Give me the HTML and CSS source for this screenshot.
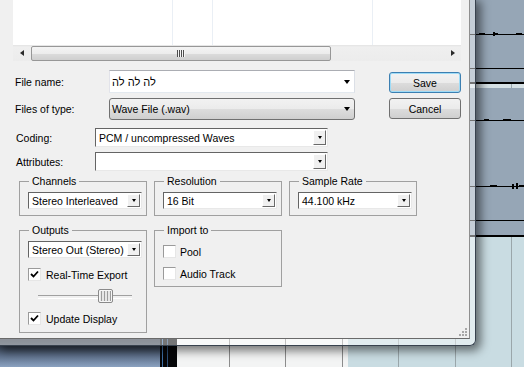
FILE: index.html
```html
<!DOCTYPE html>
<html lang="en">
<head>
    <meta charset="UTF-8">
    <title>Export Audio Mixdown</title>
    <link rel="stylesheet" href="styles.css">
</head>
<body>
    <div class="desktop">
        <!-- project window behind the dialog -->
        <div class="backdrop">
            <svg class="lanes" width="524" height="237" viewBox="0 0 524 237" aria-hidden="true">
                <rect width="524" height="237" fill="#96a6b6"/>
                <g fill="#000">
                    <rect y="34" width="524" height="1"/>
                    <rect x="479" y="33" width="6" height="2"/>
                    <rect x="493" y="32" width="2" height="4"/>
                    <rect x="495" y="33" width="3" height="2"/>
                    <rect x="516" y="33" width="6" height="2"/>
                    <rect y="68" width="524" height="1"/>
                    <rect y="82" width="524" height="2"/>
                    <rect y="120" width="524" height="1"/>
                    <rect x="484" y="119" width="5" height="2"/>
                    <rect x="503" y="119" width="8" height="2"/>
                    <rect y="186" width="524" height="1"/>
                    <rect x="490" y="185" width="7" height="2"/>
                    <rect x="512" y="184" width="2" height="5"/>
                    <rect x="516" y="183" width="2" height="6"/>
                    <rect x="519" y="185" width="5" height="2"/>
                    <rect y="220" width="524" height="1"/>
                    <rect y="235" width="524" height="2"/>
                </g>
                <rect y="84" width="524" height="4" fill="#d6e1e5"/>
                <rect x="511" y="84" width="1" height="4" fill="#9aa8ae"/>
            </svg>
            <div class="lower">
                <div class="mixer"></div>
                <div class="meter"></div>
                <div class="ruler"></div>
                <div class="ruler tinted"></div>
            </div>
        </div>

        <div class="window">
            <div class="client">
                <div class="file-list">
                    <div class="list-body">
                        <div class="list-col"></div>
                        <div class="list-col"></div>
                        <div class="list-col"></div>
                        <div class="list-col"></div>
                    </div>
                    <div class="hscroll">
                        <div class="scroll-arrow left"></div>
                        <div class="scroll-thumb"><span class="thumb-grip"></span></div>
                        <div class="scroll-track"></div>
                        <div class="scroll-arrow right"></div>
                    </div>
                </div>

                <div class="name-grid">
                    <label class="row-label">File name:</label>
                    <div class="text-combo"><span class="hebrew">לה לה לה</span><span class="drop-arrow"></span></div>
                    <button class="btn btn-default save">Save</button>

                    <label class="row-label">Files of type:</label>
                    <div class="type-combo"><span>Wave File (.wav)</span><span class="drop-arrow"></span></div>
                    <button class="btn cancel">Cancel</button>
                </div>

                <div class="options">
                    <div class="field-grid">
                        <label class="row-label">Coding:</label>
                        <div class="select tall"><span class="select-value">PCM / uncompressed Waves</span><span class="select-button"></span></div>
                        <label class="row-label">Attributes:</label>
                        <div class="select tall"><span class="select-value"></span><span class="select-button"></span></div>
                    </div>

                    <div class="group-row">
                        <fieldset class="group">
                            <legend>Channels</legend>
                            <div class="select"><span class="select-value">Stereo Interleaved</span><span class="select-button"></span></div>
                        </fieldset>
                        <fieldset class="group">
                            <legend>Resolution</legend>
                            <div class="select"><span class="select-value">16 Bit</span><span class="select-button"></span></div>
                        </fieldset>
                        <fieldset class="group">
                            <legend>Sample Rate</legend>
                            <div class="select"><span class="select-value">44.100 kHz</span><span class="select-button"></span></div>
                        </fieldset>
                    </div>

                    <div class="group-row second">
                        <fieldset class="group outputs">
                            <legend>Outputs</legend>
                            <div class="select"><span class="select-value">Stereo Out (Stereo)</span><span class="select-button"></span></div>
                            <div class="check-row first">
                                <span class="check checked"><svg width="11" height="11" viewBox="0 0 11 11"><polyline points="2,5 4.5,7.5 9,2.5" fill="none" stroke="#000" stroke-width="1.8"/></svg></span>
                                <span>Real-Time Export</span>
                            </div>
                            <div class="slider"><span class="slider-thumb"></span></div>
                            <div class="check-row">
                                <span class="check checked"><svg width="11" height="11" viewBox="0 0 11 11"><polyline points="2,5 4.5,7.5 9,2.5" fill="none" stroke="#000" stroke-width="1.8"/></svg></span>
                                <span>Update Display</span>
                            </div>
                        </fieldset>
                        <fieldset class="group import">
                            <legend>Import to</legend>
                            <div class="check-row first">
                                <span class="check"></span>
                                <span>Pool</span>
                            </div>
                            <div class="check-row">
                                <span class="check"></span>
                                <span>Audio Track</span>
                            </div>
                        </fieldset>
                    </div>
                </div>

                <svg class="size-grip" width="10" height="10" viewBox="0 0 10 10" aria-hidden="true">
                    <g fill="#a8a8a8">
                        <rect x="7" y="1" width="2" height="2"/>
                        <rect x="4" y="4" width="2" height="2"/>
                        <rect x="7" y="4" width="2" height="2"/>
                        <rect x="1" y="7" width="2" height="2"/>
                        <rect x="4" y="7" width="2" height="2"/>
                        <rect x="7" y="7" width="2" height="2"/>
                    </g>
                </svg>
            </div>
        </div>
    </div>
</body>
</html>
```

FILE: styles.css
```css
:root {
    --face: #f0f0f0;
    --text: #000000;
    --etch: #a0a0a0;
    --sunken: #646464;
    --light: #e8e8e8;
    --btn-border: #707070;
    --btn-face: linear-gradient(#f2f2f2, #ebebeb 50%, #dddddd 50%, #cfcfcf);
}

* {
    margin: 0;
    padding: 0;
    box-sizing: border-box;
}

body {
    font-family: "Liberation Sans", Arial, "DejaVu Sans", sans-serif;
    font-size: 10.5px;
    color: var(--text);
    background-color: #c9dce2;
}

.desktop {
    position: relative;
    width: 524px;
    height: 367px;
    overflow: hidden;
}

/* project window behind */
.backdrop {
    display: flex;
    flex-direction: column;
    height: 367px;
}

.lanes {
    display: block;
    flex: none;
}

.lower {
    display: flex;
    flex: 1;
}

.mixer {
    width: 160px;
    background: linear-gradient(#2e3846 0, #2e3846 104px, #3a4658 110px, #5a6c86 118px, #8ba2c0 130px);
}

.meter {
    width: 17px;
    background: linear-gradient(90deg, #050608 2px, #3d6fa6 2px 3px, #050608 3px 7px, #2c4f78 7px 8px, #050608 8px);
}

.ruler {
    width: 171px;
    background: #f3f4f4 linear-gradient(90deg, transparent 52px, #8c8c8c 52px 53px, transparent 53px 108px, #8c8c8c 108px 109px, transparent 109px 165px, #8c8c8c 165px 166px, transparent 166px);
}

.ruler.tinted {
    flex: 1;
    background: #c9dce2 linear-gradient(90deg, transparent 50px, #9aa6aa 50px 51px, transparent 51px 107px, #9aa6aa 107px 108px, transparent 108px 163px, #9aa6aa 163px 164px, transparent 164px);
}

/* dialog window sitting on top of the project window */
.window {
    position: absolute;
    left: 0;
    top: 0;
    width: 476px;
    height: 346px;
    padding: 0 5px 6px 0;
    background: rgba(255, 255, 255, 0.45);
    border-right: 1px solid #38424e;
    border-bottom: 1px solid #38424e;
    border-bottom-right-radius: 6px;
    box-shadow: 3px 3px 10px 2px rgba(0, 0, 0, 0.5);
}

.client {
    position: relative;
    height: 100%;
    background-color: var(--face);
    border-right: 1px solid #8f8f8f;
    border-bottom: 1px solid #6a6a6a;
}

/* file browser list */
.file-list {
    margin-left: 13px;
    width: 448px;
}

.list-body {
    display: flex;
    height: 45px;
    background: #ffffff;
}

.list-col {
    border-right: 1px solid #eaeff5;
}

.list-col:nth-child(1) { width: 160px; }
.list-col:nth-child(2) { width: 40px; }
.list-col:nth-child(3) { width: 160px; }
.list-col:nth-child(4) { flex: 1; border-right: none; }

.hscroll {
    display: flex;
    align-items: center;
    height: 16px;
    background: linear-gradient(#e3e3e3, #efefef 2px, #ececec);
}

.scroll-arrow {
    width: 17px;
    height: 16px;
    display: flex;
    align-items: center;
    justify-content: center;
}

.scroll-arrow::before {
    content: "";
    border-style: solid;
    border-color: transparent;
}

.scroll-arrow.left::before {
    border-width: 3.5px 4px 3.5px 0;
    border-right-color: #2a2a2a;
}

.scroll-arrow.right::before {
    border-width: 3.5px 0 3.5px 4px;
    border-left-color: #2a2a2a;
}

.scroll-thumb {
    margin-left: 1px;
    width: 300px;
    height: 15px;
    border: 1px solid #979797;
    border-radius: 2px;
    background: linear-gradient(#f4f4f4, #ececec 50%, #dcdcdc 50%, #cfcfcf);
    display: flex;
    align-items: center;
    justify-content: center;
}

.thumb-grip {
    width: 8px;
    height: 7px;
    background: repeating-linear-gradient(90deg, #4d4d4d 0 1px, #f6f6f6 1px 2px);
}

.scroll-track {
    flex: 1;
}

/* name / type rows */
.name-grid {
    display: grid;
    grid-template-columns: 94px 246px 1fr;
    grid-template-rows: 23px 22px;
    row-gap: 5px;
    align-items: center;
    margin: 9px 8px 0 15px;
}

.row-label {
    white-space: nowrap;
}

.text-combo,
.type-combo {
    display: flex;
    align-items: center;
    justify-content: space-between;
    padding: 0 4px 0 2px;
    white-space: nowrap;
}

.text-combo {
    height: 23px;
    background: #ffffff;
    border: 1px solid;
    border-color: #abadb3 #dbdfe6 #e3e9ef #e2e3ea;
}

.type-combo {
    height: 22px;
    border: 1px solid var(--btn-border);
    border-radius: 3px;
    background: var(--btn-face);
}

.hebrew {
    font-family: "Liberation Sans", "DejaVu Sans", sans-serif;
    font-size: 11px;
}

.drop-arrow {
    width: 0;
    height: 0;
    border-style: solid;
    border-width: 4px 3.5px 0;
    border-color: #000 transparent transparent;
}

.btn {
    width: 72px;
    height: 21px;
    margin-left: 34px;
    border: 1px solid var(--btn-border);
    border-radius: 3px;
    background: var(--btn-face);
    font: inherit;
    color: var(--text);
}

.btn-default {
    border-color: #3c7fb1;
    box-shadow: inset 0 0 0 1px #9fdcf7;
}

.save {
    align-self: end;
}

.cancel {
    align-self: start;
}

/* lower options */
.options {
    margin: 8px 0 0 16px;
}

.field-grid {
    display: grid;
    grid-template-columns: 79px 233px;
    grid-template-rows: 19px 19px;
    row-gap: 5px;
    align-items: center;
}

.select {
    display: flex;
    height: 17px;
    background: #ffffff;
    border: 1px solid;
    border-color: var(--sunken) var(--light) var(--light) var(--sunken);
}

.select.tall {
    height: 19px;
}

.select-value {
    flex: 1;
    padding-left: 3px;
    white-space: nowrap;
    overflow: hidden;
    display: flex;
    align-items: center;
}

.select-button {
    width: 13px;
    margin: 1px;
    background: var(--face);
    border: 1px solid;
    border-color: #ffffff #696969 #696969 #ffffff;
    display: flex;
    align-items: center;
    justify-content: center;
}

.select-button::before {
    content: "";
    border-style: solid;
    border-width: 3px 2.5px 0;
    border-color: #000 transparent transparent;
}

.group-row {
    display: flex;
    align-items: flex-start;
    gap: 7px;
    margin: 4px 0 0 3px;
}

.group-row.second {
    margin-top: 8px;
}

.group {
    width: 128px;
    min-width: 0;
    border: 1px solid var(--etch);
    padding: 4px 4px 6px 8px;
}

.group legend {
    margin-left: 1px;
    padding: 0 3px;
    line-height: 13px;
}

.outputs {
    padding-bottom: 7px;
}

.import {
    padding-bottom: 6px;
}

.check-row {
    display: flex;
    align-items: center;
    gap: 5px;
    height: 13px;
    margin-top: 8px;
    white-space: nowrap;
}

.outputs .check-row.first {
    margin-top: 10px;
}

.import .check-row {
    gap: 4px;
    margin-top: 9px;
}

.import .check-row.first {
    margin-top: 4px;
}

.check {
    width: 13px;
    height: 13px;
    background: #ffffff;
    border: 1px solid;
    border-color: #9a9a9a #e6e6e6 #e6e6e6 #9a9a9a;
    display: flex;
    align-items: center;
    justify-content: center;
}

.slider {
    position: relative;
    width: 94px;
    height: 15px;
    margin: 8px 0 0 10px;
}

.slider::before {
    content: "";
    position: absolute;
    left: 0;
    right: 0;
    top: 6px;
    height: 2px;
    border-top: 1px solid #a0a0a0;
    border-bottom: 1px solid #ffffff;
}

.slider-thumb {
    position: absolute;
    left: 60px;
    top: 0;
    width: 15px;
    height: 14px;
    border: 1px solid #8a8a8a;
    border-radius: 2px;
    background: repeating-linear-gradient(90deg, #e6e6e6 0 2px, #9c9c9c 2px 3px);
    box-shadow: inset 0 0 0 1px #f6f6f6;
}

.size-grip {
    position: absolute;
    right: 1px;
    bottom: 1px;
}
```
